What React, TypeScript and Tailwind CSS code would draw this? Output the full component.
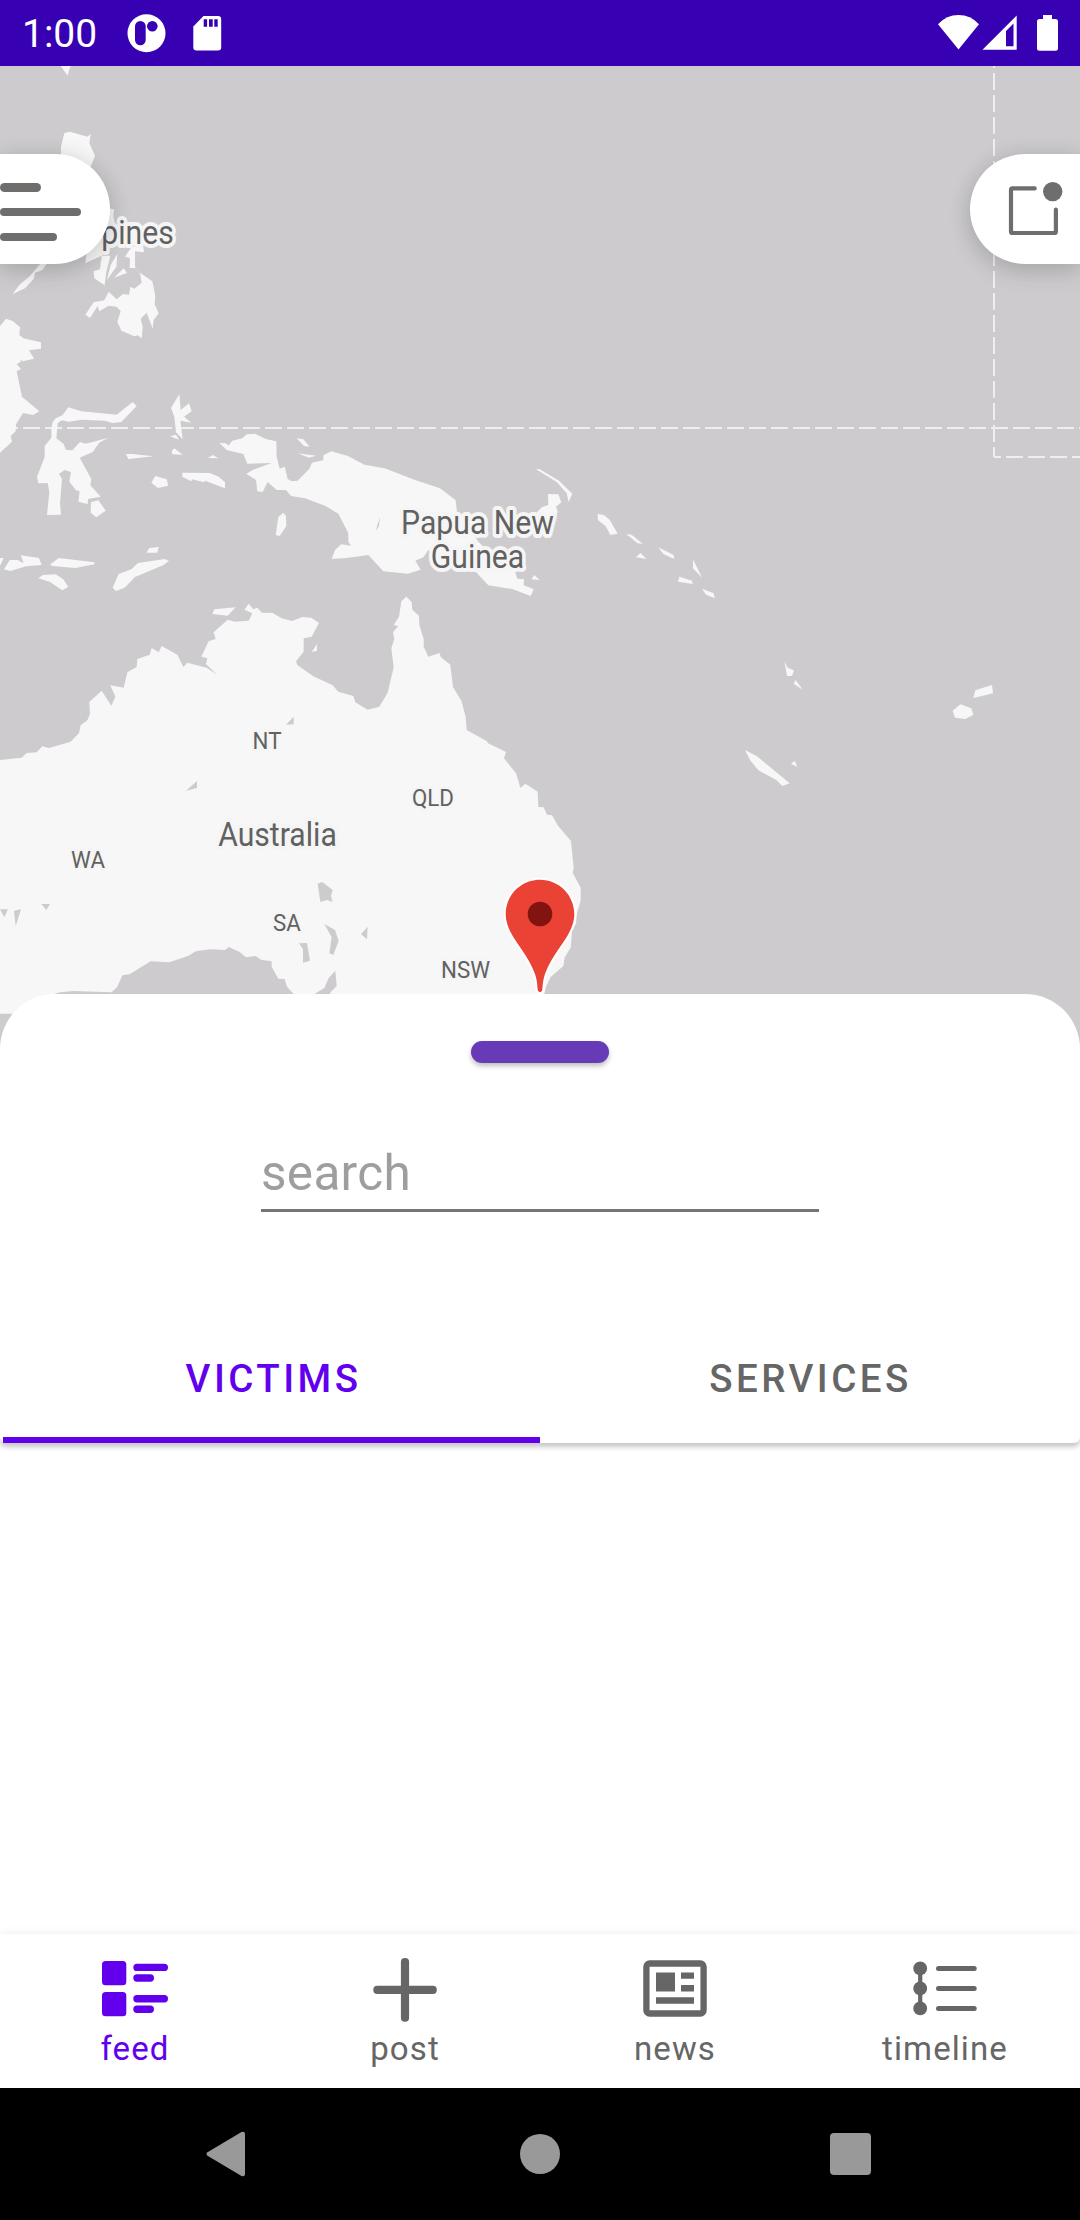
import React from "react";

const WATER = "#cdcbce";
const LAND = "#f7f7f7";

// Coastlines are grouped in tiles; every tile unit is a third of a pixel.
type Tile = { x: number; y: number; land: string[]; water?: string[] };

const tiles: Tile[] = [
  {
    x: 0,
    y: 0,
    land: [
      "180,195 214,195 208,208 203,227",
      "193,399 210,395 262,410 272,402 268,430 285,467 272,500 272,540 183,540 183,440",
      "325,625 342,628 340,650 352,700 310,760 305,767 256,790 262,740",
      "120,792 140,792 127,810 105,818 101,837 75,865 37,883 60,853 90,828",
      "305,767 331,767 318,820 314,856 283,835 281,814 300,808",
      "352,762 349,800 321,840 332,795",
      "371,805 381,819 342,833",
      "395,740 430,740 432,757 405,754 405,801 420,818 457,844 466,888 464,913 476,940 461,960 458,986 440,938 422,956 428,980 425,1015 413,1006 403,1009 364,992 352,966 362,934 350,920 326,917 298,934 293,918 270,954 256,944 281,907 313,901 326,875 350,898 369,882 387,884 391,860 403,866 425,848 420,820 407,803 389,804 390,774 375,770",
    ],
  },
  {
    x: 0,
    y: 300,
    land: [
      "0,78 18,56 38,63 60,82 58,105 70,115 123,127 123,146 87,151 102,176 62,185 50,193 63,207 50,214 66,290 118,334 99,345 69,339 48,373 47,394 32,408 36,425 0,458",
      "154,385 158,367 167,355 187,346 205,322 244,334 350,344 398,306 410,318 364,366 337,369 315,362 245,359 207,365 185,361 173,370 169,415 191,432 198,450 217,451 240,426 256,431 278,426 324,413 298,428 278,456 239,473 274,537 271,556 302,590 264,597 263,612 235,605 239,574 228,571 208,545 213,516 194,510 177,521 186,537 180,610 183,644 141,645 148,575 143,549 115,550 111,530 134,471 134,438 154,413",
      "273,607 295,601 317,632 289,652 272,638",
      "538,283 542,330 567,310 575,334 552,350 574,368 541,362 548,418 528,397 523,350 513,324",
      "510,409 528,404 537,419",
      "515,453 523,445 548,464 517,463",
      "378,462 397,462 461,469 385,477",
      "624,474 638,465 656,475",
      "454,548 466,528 500,538 505,557 474,564",
      "547,518 629,519 656,530 675,547 675,565 615,542 612,547 577,538 574,544 547,530",
      "890,415 910,418 929,440 912,438",
      "893,460 949,467 927,473",
      "850,638 858,648 859,678 839,708 827,705 835,651",
      "658,429 678,430 685,437 697,422 727,415 740,403 765,401 797,417 829,424 830,470 839,506 854,500 863,537 875,544 893,542 928,506 936,488 970,481 970,466 994,454 1044,468 1093,494 1154,505 1245,540 1320,565 1367,601 1371,635 1405,680 1435,725 1480,770 1545,815 1552,836 1572,838 1571,856 1601,868 1592,888 1537,867 1465,856 1430,818 1380,790 1320,770 1285,750 1270,772 1246,782 1262,809 1223,821 1150,814 1105,765 1040,774 995,777 1005,750 1024,733 1053,737 1045,725 1045,700 1015,641 975,617 915,595 873,588 858,570 830,570 803,546 788,576 772,574 768,540 739,521 760,509 815,489 742,491 730,462 680,450",
      "0,774 11,774 0,797",
      "12,808 29,780 53,780 71,790 62,766 117,774 125,795 78,799 31,813",
      "150,794 176,774 283,787 284,793 226,804 158,798",
      "115,835 128,825 167,823 190,838 205,860 187,871 149,845",
      "338,863 356,822 394,808 414,789 495,777 507,783 489,796 405,831 374,863 348,873",
      "439,758 448,744 476,741 472,758",
    ],
    water: ["60,180 70,184 64,188"],
  },
  {
    x: 340,
    y: 400,
    land: [
      "588,208 598,207 657,242 697,281 686,306 680,280 650,246",
      "624,282 655,283 664,307 648,320 653,335 640,375 600,400 560,398 560,370 605,322 625,315",
      "773,342 792,345 810,361 833,401 811,405 797,378 774,361",
      "858,402 875,404 908,431 893,430",
      "888,472 901,459 920,477",
      "955,442 1001,465 1003,477 970,462",
      "1059,478 1086,533 1059,505",
      "1018,530 1056,542 1058,552 1014,545",
      "1086,566 1121,580 1124,595 1098,584",
      "583,525 599,540 574,538",
    ],
    water: ["120,350 107,392 117,378"],
  },
  {
    x: 0,
    y: 580,
    land: [
      "0,540 65,533 80,519 110,517 127,499 147,504 212,485 237,459 242,436 262,421 270,402 268,366 305,332 334,377 346,350 331,316 371,323 382,277 410,261 412,237 449,224 455,204 476,217 485,198 532,224 550,261 562,248 620,263 651,284 618,252 622,235 604,230 626,184 647,177 641,157 683,119 705,125 746,122 757,100 733,89 746,71 760,88 772,83 786,98 818,99 845,115 877,123 907,111 934,113 957,129 935,170 911,175 911,215 888,244 892,255 940,289 998,316 1015,335 1060,348 1066,367 1103,389 1138,380 1163,338 1181,262 1174,205 1183,177 1179,156 1195,139 1181,135 1197,110 1204,64 1219,50 1235,66 1237,89 1257,108 1258,135 1271,176 1271,200 1285,230 1319,219 1322,231 1351,254 1359,321 1384,362 1397,410 1400,450 1460,483 1464,490 1518,516 1512,535 1549,581 1561,624 1576,611 1613,635 1615,681 1631,682 1641,704 1656,706 1674,737 1713,783 1721,865 1718,878 1742,923 1742,962 1731,1000 1728,1030 1716,1055 1712,1103 1694,1132 1690,1158 1652,1191 1638,1220 1633,1242 1633,1301 0,1301",
      "637,102 643,88 707,82 683,107",
      "951,192 951,212 935,216",
    ],
    water: [
      "160,1243 180,1237 220,1233 335,1237 352,1220 367,1186 390,1182 452,1144 508,1147 566,1127 587,1114 630,1108 675,1110 686,1101 718,1115 738,1132 767,1128 783,1139 815,1144 815,1160 835,1196 854,1197 861,1220 882,1243",
      "942,1243 973,1224 986,1194 1006,1172 1010,1218 992,1236 990,1243",
      "881,410 881,433 858,434",
      "591,603 591,624 558,632",
      "953,911 967,906 998,930 993,948 998,966 981,960 961,966",
      "973,1032 1005,1050 1016,1082 1000,1125 988,1120 995,1072",
      "897,1090 921,1089 930,1142 909,1148 909,1108",
      "1103,1040 1101,1078 1083,1063",
      "0,988 24,988 13,1012",
      "42,992 63,988 47,1038",
      "124,972 150,972 139,990",
    ],
  },
  {
    x: 700,
    y: 620,
    land: [
      "253,124 263,143 282,151 276,168 261,168",
      "287,180 308,209 281,191",
      "135,390 170,408 269,490 247,498 229,480 175,451 150,420",
      "284,422 292,440 273,432",
      "826,211 876,195 879,220 820,234",
      "758,272 781,253 814,265 820,284 796,297 765,293",
    ],
  },
];

type Label = { lines: string[]; x: number; y: number; s: number };

const labels: Label[] = [
  { lines: ["pines"], x: 137.5, y: 243.7, s: 33.5 },
  { lines: ["Papua New", "Guinea"], x: 477.5, y: 534, s: 33.5 },
  { lines: ["Australia"], x: 277.5, y: 845.7, s: 33.5 },
  { lines: ["NT"], x: 267, y: 749.3, s: 24.8 },
  { lines: ["WA"], x: 88, y: 868.3, s: 24.8 },
  { lines: ["SA"], x: 287, y: 930.7, s: 24.8 },
  { lines: ["QLD"], x: 433, y: 805.7, s: 24.8 },
  { lines: ["NSW"], x: 465.5, y: 978.3, s: 24.8 },
];

function WorldMap() {
  return (
    <svg className="block h-[983px] w-[1080px]" viewBox="0 66 1080 983">
      <rect x="0" y="66" width="1080" height="983" fill={WATER} />
      <g stroke="#eeedef" strokeWidth="2" strokeDasharray="17 5" fill="none">
        <path d="M1 428H1080" />
        <path d="M994 51V457" />
        <path d="M994 457h7" strokeDasharray="none" />
        <path d="M1006 457H1080" />
      </g>
      {tiles.map((tile) => (
        <g key={`${tile.x}-${tile.y}`} transform={`translate(${tile.x} ${tile.y}) scale(0.33333)`}>
          {tile.land.map((p) => (
            <polygon key={p} points={p} fill={LAND} />
          ))}
          {tile.water?.map((p) => (
            <polygon key={p} points={p} fill={WATER} />
          ))}
        </g>
      ))}
      {labels.map((l) => (
        <text
          key={l.lines[0]}
          transform={`translate(${l.x} ${l.y}) scale(0.9 1)`}
          textAnchor="middle"
          fontSize={l.s}
          fill="#616161"
          stroke="#f5f5f5"
          strokeWidth={l.s > 30 ? 8 : 5}
          strokeLinejoin="round"
          paintOrder="stroke"
        >
          {l.lines.map((line, i) => (
            <tspan key={line} x="0" y={i * 33.7}>
              {line}
            </tspan>
          ))}
        </text>
      ))}
      <path
        d="M540 879.7C521 879.7 505.700 895 505.700 914C505.700 922 509 930 513 936.500C521 949 530 960 535 974C537.500 982 537.200 986 537.800 990.500Q540 994 542.200 990.500C542.800 986 542.500 982 545 974C550 960 559 949 567 936.500C571 930 574.300 922 574.300 914C574.300 895 559 879.700 540 879.700Z"
        fill="#ea4335"
        stroke="#fff"
        strokeWidth="4"
        paintOrder="stroke"
      />
      <circle cx="540" cy="914" r="12.3" fill="#811411" />
    </svg>
  );
}

function StatusBar() {
  return (
    <header className="flex h-[66px] shrink-0 items-center bg-[#3700b3] text-white">
      <span className="ml-[22px] w-[105px] pt-[2px] text-[39px] leading-[66px]">1:00</span>
      <svg className="h-[66px] w-[110px]" viewBox="127 0 110 66" fill="#fff">
        <circle cx="146.500" cy="33.300" r="19" />
        <rect x="135" y="21" width="10.700" height="24.300" rx="5.300" fill="#3700b3" />
        <circle cx="152.300" cy="26.300" r="5.300" fill="#3700b3" />
        <path d="M203.500 16H218Q221.200 16 221.200 19.200V47.200Q221.200 50.400 218 50.400H196.500Q193.300 50.400 193.300 47.200V26.500Z" />
        <path d="M203.700 19.300h3.400v7.400h-3.400zM209 19.300h3.700v7.400H209zM214.300 19.300h3.400v7.400h-3.400z" fill="#3700b3" />
      </svg>
      <svg className="ml-auto h-[66px] w-[150px]" viewBox="930 0 150 66" fill="#fff">
        <path d="M938 24.300Q946.500 15.100 958.500 15.100T979 24.300L958.500 49.500Z" />
        <path
          fillRule="evenodd"
          d="M982.500 49.700H1016.700V15.500ZM1006 46.300H1013.500V23.500L1006 31Z"
        />
        <path d="M1043 15h9v4h3.500q2.500 0 2.500 2.500v26.700q0 2.500-2.500 2.500h-16q-2.500 0-2.500-2.500V21.500q0-2.500 2.500-2.500h3.500z" />
      </svg>
    </header>
  );
}

function FeedIcon() {
  return (
    <svg className="size-[66px]" viewBox="0 0 66 66" fill="currentColor">
      <rect x="0" y="4" width="24.300" height="24.300" rx="3.500" />
      <rect x="0" y="35" width="24.300" height="24.300" rx="3.500" />
      <rect x="31.300" y="6.700" width="34.700" height="7.400" rx="3.700" />
      <rect x="31.300" y="17.300" width="20.700" height="7.400" rx="3.700" />
      <rect x="31.300" y="38" width="34.700" height="7.400" rx="3.700" />
      <rect x="31.300" y="48.600" width="20.700" height="7.400" rx="3.700" />
    </svg>
  );
}

function PlusIcon() {
  return (
    <svg className="size-[66px]" viewBox="0 0 66 66" fill="currentColor">
      <rect x="28.900" y="1" width="8.200" height="63.700" rx="4" />
      <rect x="1.300" y="28.700" width="63.500" height="8.200" rx="4" />
    </svg>
  );
}

function NewsIcon() {
  return (
    <svg className="size-[66px]" viewBox="0 0 66 66" fill="currentColor">
      <rect x="4.400" y="6.500" width="57.200" height="50" rx="3.200" fill="none" stroke="currentColor" strokeWidth="6.300" />
      <path d="M14 15.400h19v19H14zM39 15.400h13v6.400H39zM39 28h13v6.400H39zM14 40.300h38v6.400H14z" />
    </svg>
  );
}

function TimelineIcon() {
  return (
    <svg className="size-[66px]" viewBox="0 0 66 66" fill="currentColor" stroke="currentColor" strokeLinecap="round">
      <path d="M8.200 11.300v40" strokeWidth="4.200" />
      {[11.4, 31.4, 51.4].map((y) => (
        <g key={y}>
          <circle cx="8.200" cy={y} r="6.900" stroke="none" />
          <path d={`M26.500 ${y}H62.200`} strokeWidth="5" />
        </g>
      ))}
    </svg>
  );
}

const navItems = [
  { label: "feed", icon: <FeedIcon />, active: true },
  { label: "post", icon: <PlusIcon /> },
  { label: "news", icon: <NewsIcon /> },
  { label: "timeline", icon: <TimelineIcon /> },
];

export default function App() {
  return (
    <div className="flex h-[2220px] w-[1080px] flex-col overflow-hidden bg-white font-['Roboto',sans-serif]">
      <StatusBar />

      <section className="relative h-[983px] shrink-0">
        <WorldMap />
        <button
          aria-label="Menu"
          className="absolute left-0 top-[88px] flex h-[110px] w-[110px] flex-col items-start rounded-r-[55px] bg-white pt-[29px] shadow-[0_8px_24px_rgba(0,0,0,0.14),0_0_22px_rgba(0,0,0,0.08)]"
        >
          <span className="h-[9px] w-[41px] rounded-full bg-[#6f6e6c]" />
          <span className="mt-4 h-2 w-[81px] rounded-full bg-[#6f6e6c]" />
          <span className="mt-[17px] h-2 w-[57px] rounded-full bg-[#6f6e6c]" />
        </button>
        <button
          aria-label="Notifications"
          className="absolute right-0 top-[88px] h-[110px] w-[110px] rounded-l-[55px] bg-white shadow-[0_8px_24px_rgba(0,0,0,0.14),0_0_22px_rgba(0,0,0,0.08)]"
        >
          <svg className="size-[110px]" viewBox="970 154 110 110" fill="none">
            <path
              d="M1034.700 188.400H1012.500Q1011 188.400 1011 190V231.400Q1011 233 1012.500 233H1054.300Q1055.900 233 1055.900 231.400V209.700"
              stroke="#6f6e6c"
              strokeWidth="4.200"
              strokeLinecap="round"
            />
            <circle cx="1052.700" cy="191.600" r="9.700" fill="#6f6e6c" />
          </svg>
        </button>
      </section>

      <main className="relative -mt-[55px] flex h-[940px] shrink-0 flex-col rounded-t-[55px] bg-white">
        <div className="flex h-[116px] shrink-0 justify-center pt-[47px]">
          <div className="h-[22px] w-[138px] rounded-[11px] bg-[#673ab7] shadow-[0_3px_5px_rgba(0,0,0,0.26)]" />
        </div>
        <div className="flex h-[333px] shrink-0 flex-col rounded-[6px] bg-white shadow-[0_4px_5px_rgba(0,0,0,0.22)]">
          <div className="mx-auto mt-[29px] h-[73px] w-[558px] border-b-[3px] border-[#757575] pt-px text-[49.5px] leading-[66px] tracking-[0.3px] text-[#9e9e9e]">
            search
          </div>
          <div className="mt-auto flex h-[132px] pl-[3px] text-[38.5px] font-medium tracking-[3.44px]">
            <div className="flex w-[537px] items-center justify-center border-b-[6px] border-[#6200ee] pl-[4px] pt-[9px] text-[#6200ee]">
              VICTIMS
            </div>
            <div className="flex w-[540px] items-center justify-center pl-px pt-[3px] text-[#666]">SERVICES</div>
          </div>
        </div>
      </main>

      <nav className="relative flex h-[154px] shrink-0 bg-white shadow-[0_0_10px_rgba(0,0,0,0.08)]">
        {navItems.map((n) => (
          <div
            key={n.label}
            className={
              n.active
                ? "flex w-[270px] flex-col items-center pt-[23px] text-[#6200ee]"
                : "flex w-[270px] flex-col items-center pt-[23px] text-[#666]"
            }
          >
            {n.icon}
            <span className="mt-[6px] text-[33px] leading-[39px] tracking-[1.1px]">{n.label}</span>
          </div>
        ))}
      </nav>

      <footer className="flex h-[132px] shrink-0 items-center bg-black pl-[204px]">
        <svg className="h-[46px] w-[42px]" viewBox="0 0 42 46" fill="#999">
          <path d="M3.500 21.200 37.500 1Q41 0 41 3V43Q41 46 37.500 45L3.500 24.800Q1.500 23 3.500 21.200Z" />
        </svg>
        <div className="ml-[274px] size-[40px] rounded-full bg-[#999]" />
        <div className="ml-[270px] h-[42px] w-[41px] rounded-[4px] bg-[#999]" />
      </footer>
    </div>
  );
}
